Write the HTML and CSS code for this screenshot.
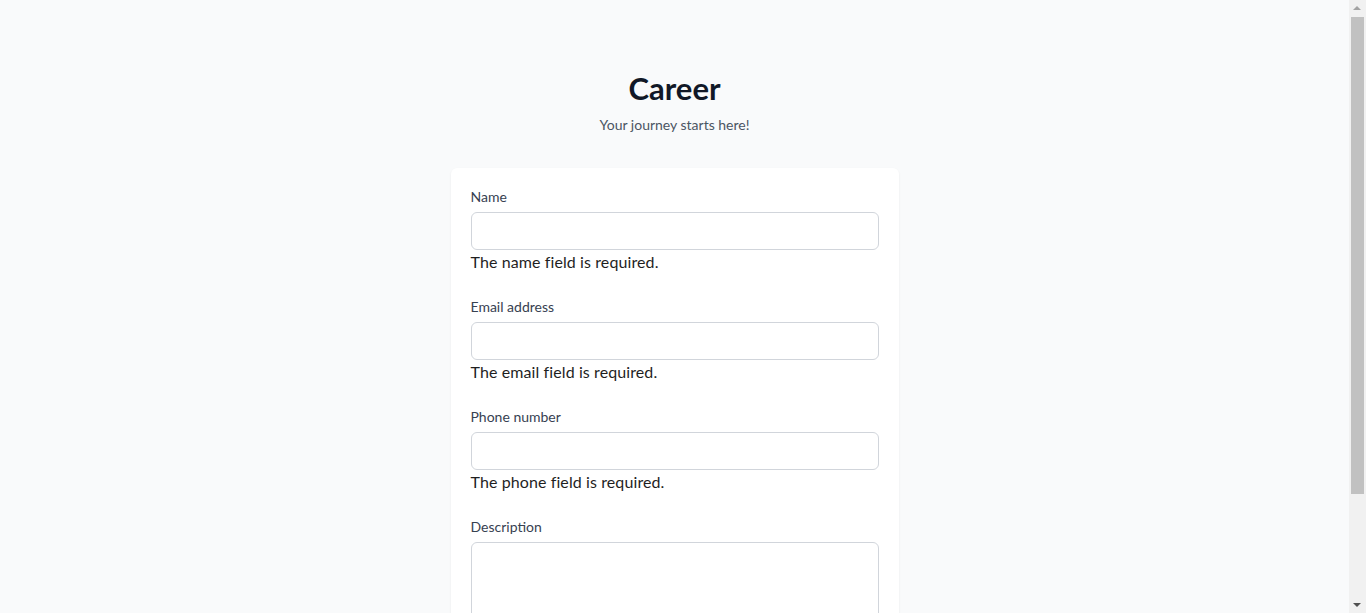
FILE: index.html
```html
<!DOCTYPE html>
<html lang="en">
<head>
<meta charset="utf-8">
<title>Career</title>
<link rel="stylesheet" href="styles.css">
</head>
<body>
<main class="page">
  <header class="intro">
    <h1 class="title">Career</h1>
    <p class="subtitle">Your journey starts here!</p>
  </header>
  <form class="card">
    <div class="field">
      <label class="label" for="name">Name</label>
      <input class="input" id="name" type="text">
      <p class="error">The name field is required.</p>
    </div>
    <div class="field">
      <label class="label" for="email">Email address</label>
      <input class="input" id="email" type="email">
      <p class="error">The email field is required.</p>
    </div>
    <div class="field">
      <label class="label" for="phone">Phone number</label>
      <input class="input" id="phone" type="tel">
      <p class="error">The phone field is required.</p>
    </div>
    <div class="field">
      <label class="label" for="desc">Description</label>
      <textarea class="input textarea" id="desc"></textarea>
    </div>
  </form>
</main>
<div class="scrollbar" aria-hidden="true">
  <span class="arrow arrow-up"></span>
  <span class="thumb"></span>
  <span class="arrow arrow-down"></span>
</div>
</body>
</html>
```
FILE: styles.css
```css
* { box-sizing: border-box; }
html, body { margin: 0; padding: 0; }
html { scrollbar-width: none; }
html::-webkit-scrollbar { display: none; }
body {
  background: #f9fafb;
  font-family: Lato, "Noto Sans", sans-serif;
  color: #111827;
  padding-right: 17px;
}
.page {
  display: flex;
  flex-direction: column;
  align-items: center;
  padding: 70px 0 40px;
}
.intro { text-align: center; }
.title {
  margin: 0;
  font-size: 31px;
  line-height: 36px;
  font-weight: 700;
  color: #111827;
}
.subtitle {
  margin: 9px 0 0;
  font-size: 14px;
  line-height: 20px;
  color: #4b5563;
}
.card {
  margin-top: 33px;
  width: 448px;
  background: #fff;
  border-radius: 6px;
  box-shadow: 0 1px 3px rgba(0,0,0,0.04), 0 1px 2px rgba(0,0,0,0.03);
  padding: 19px 20px 20px;
  display: flex;
  flex-direction: column;
  gap: 23px;
}
.field { display: flex; flex-direction: column; }
.label {
  font-size: 14px;
  line-height: 20px;
  color: #374151;
  margin-bottom: 5px;
}
.input {
  display: block;
  width: 100%;
  height: 38px;
  border: 1px solid #d1d5db;
  border-radius: 6px;
  background: #fff;
  font: inherit;
}
.textarea { height: 110px; resize: vertical; }
.error {
  margin: 0;
  font-size: 16px;
  line-height: 24px;
  color: #1f1f1f;
  letter-spacing: 0.1px;
}
.scrollbar {
  position: fixed;
  top: 0;
  right: 0;
  bottom: 0;
  width: 17px;
  background: #f1f1f1;
}
.thumb {
  position: absolute;
  left: 2px;
  right: 2px;
  top: 17px;
  height: 477px;
  background: #c1c1c1;
}
.arrow {
  position: absolute;
  left: 4px;
  width: 0;
  height: 0;
  border-left: 4px solid transparent;
  border-right: 4px solid transparent;
}
.arrow-up { top: 6px; border-bottom: 4px solid #a3a3a3; }
.arrow-down { bottom: 6px; border-top: 4px solid #505050; }
```
